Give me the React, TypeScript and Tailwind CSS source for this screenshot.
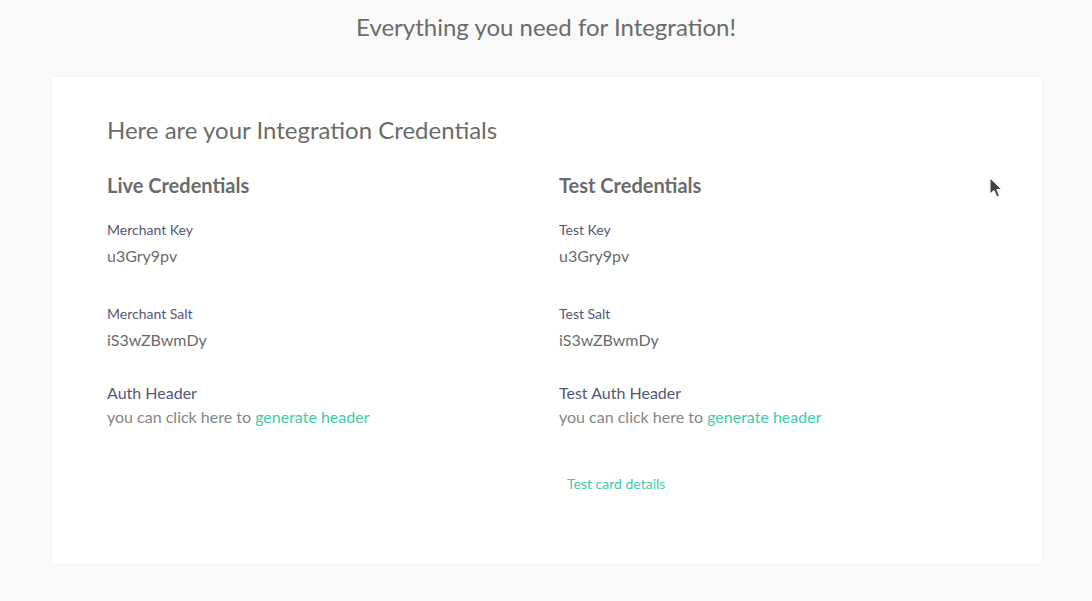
import React from "react";

const Field = ({ label, value, mb }: { label: string; value: string; mb: string }) => (
  <div className={mb}>
    <div className="text-[14px] leading-[20px] text-[#535877]">{label}</div>
    <div className="mt-[5px] text-[16px] leading-[22px] text-[#6b6b6b]">{value}</div>
  </div>
);

const Column = ({
  title,
  keyLabel,
  saltLabel,
  authLabel,
  className,
  children,
}: {
  title: string;
  keyLabel: string;
  saltLabel: string;
  authLabel: string;
  className: string;
  children?: React.ReactNode;
}) => (
  <div className={className}>
    <h3 className="text-[20px] leading-[28px] font-bold text-[#6b6b6b]">{title}</h3>
    <div className="mt-[21px]">
      <Field label={keyLabel} value="u3Gry9pv" mb="mb-[37px]" />
      <Field label={saltLabel} value="iS3wZBwmDy" mb="mb-[31px]" />
      <div className="text-[16px] leading-[22px] text-[#535877]">{authLabel}</div>
      <div className="mt-[2px] text-[16px] leading-[22px] text-[#858585]">
        you can click here to <span className="text-[#3ecba8]">generate header</span>
      </div>
    </div>
    {children}
  </div>
);

export default function App() {
  return (
    <div
      className="min-h-[601px] bg-[#f9f9f9] relative"
      style={{ fontFamily: "Lato, 'Open Sans', sans-serif" }}
    >
      <div className="pt-[11px] text-center text-[24px] leading-[32px] text-[#6b6b6b]">
        Everything you need for Integration!
      </div>
      <div className="ml-[52px] mr-[50px] mt-[34px] h-[487px] rounded-[3px] bg-white shadow-[0_0_3px_rgba(0,0,0,0.06)] pl-[55px] pr-[55px] pt-[37px]">
        <h2 className="text-[24px] leading-[32px] text-[#6b6b6b]">Here are your Integration Credentials</h2>
        <div className="mt-[25px] flex">
          <Column
            className="w-[452px]"
            title="Live Credentials"
            keyLabel="Merchant Key"
            saltLabel="Merchant Salt"
            authLabel="Auth Header"
          />
          <Column
            className="flex-1"
            title="Test Credentials"
            keyLabel="Test Key"
            saltLabel="Test Salt"
            authLabel="Test Auth Header"
          >
            <div className="mt-[46px] pl-[8px] text-[14px] leading-[20px] text-[#3ecba8]">Test card details</div>
          </Column>
        </div>
      </div>
      <svg
        className="absolute left-[989px] top-[177px]"
        width="14"
        height="22"
        viewBox="0 0 14 22"
      >
        <path d="M1 1 L1 17 L5 13.5 L8 20 L10.5 19 L7.8 12.6 L12.5 12.3 Z" fill="#444" stroke="#fff" strokeWidth="1" />
      </svg>
    </div>
  );
}
